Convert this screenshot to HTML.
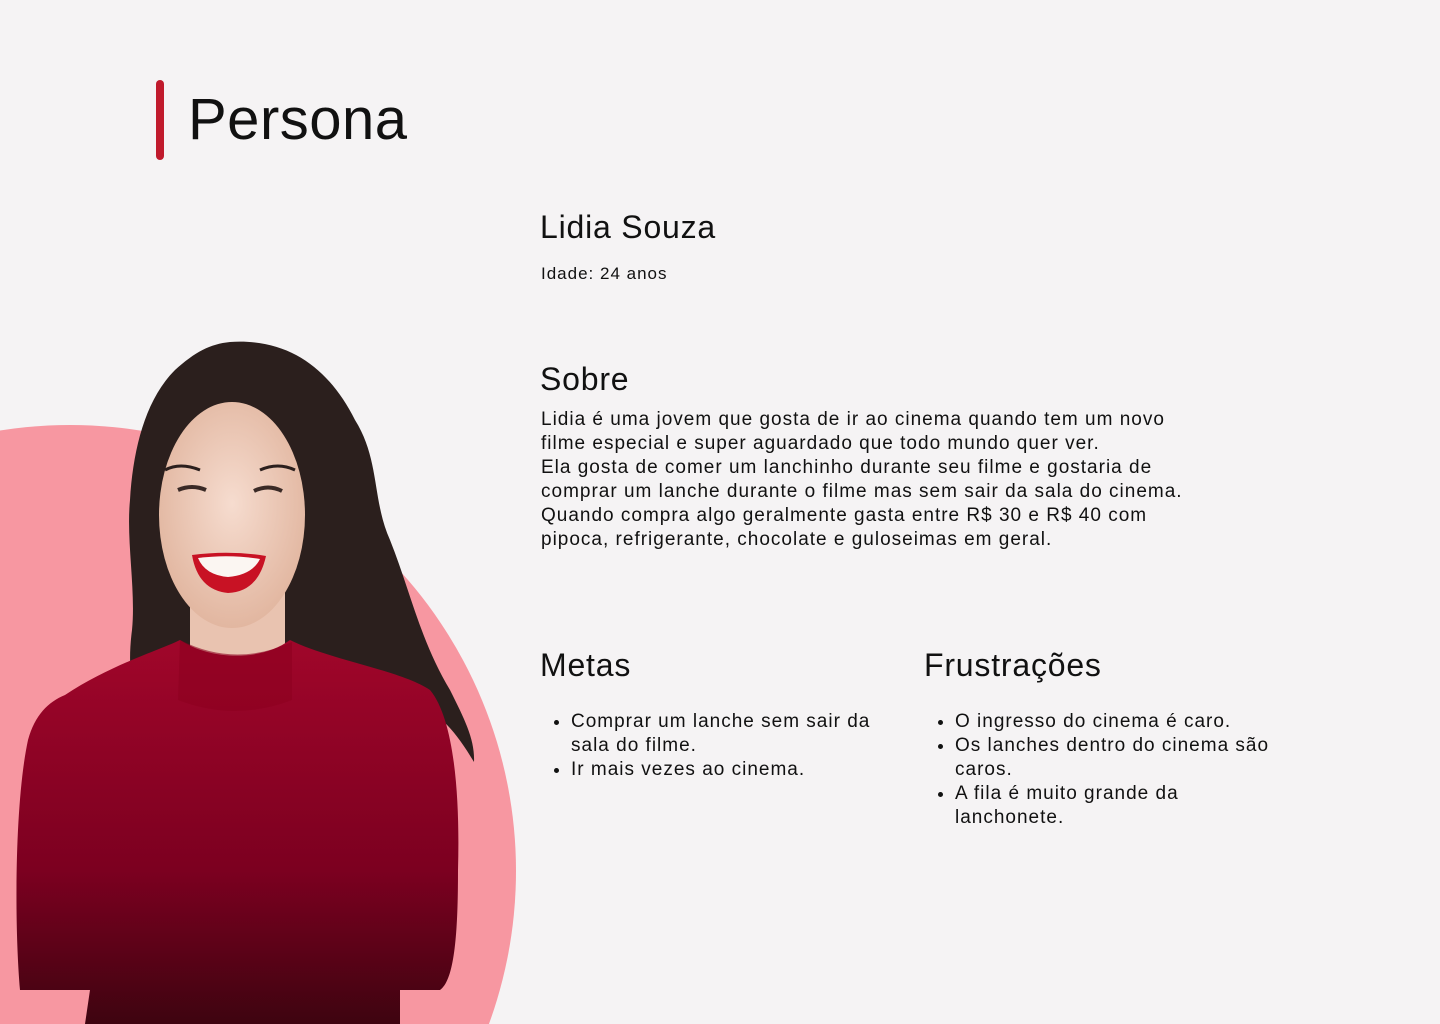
<!DOCTYPE html>
<html><head><meta charset="utf-8"><style>
html,body{margin:0;width:1440px;height:1024px;overflow:hidden}
body{background:#f5f3f4;font-family:"Liberation Sans",sans-serif;color:#111;position:relative}
.bar{position:absolute;left:156px;top:80px;width:8px;height:80px;background:#c01a2c;border-radius:4px}
h1{position:absolute;left:188px;top:84px;margin:0;font-size:58px;font-weight:400;line-height:72px;letter-spacing:0.5px}
.t{position:absolute;margin:0;white-space:nowrap}
h2{font-size:32px;font-weight:400;line-height:40px;letter-spacing:0.8px}
p,ul{font-size:19px;line-height:24px;letter-spacing:1px}
ul{padding-left:30px;margin:0}
</style></head><body>
<svg width="1440" height="1024" style="position:absolute;left:0;top:0">
<defs>
<linearGradient id="sw" x1="0" y1="0" x2="0" y2="1"><stop offset="0" stop-color="#a0062a"/><stop offset="0.6" stop-color="#7c0020"/><stop offset="1" stop-color="#3e0410"/></linearGradient>
<radialGradient id="sk" cx="0.5" cy="0.45" r="0.6"><stop offset="0" stop-color="#f6dccf"/><stop offset="1" stop-color="#e0b39c"/></radialGradient>
</defs>
<circle cx="70" cy="871" r="446" fill="#f797a1"/>
<path d="M230 342 C290 338 330 370 355 420 C380 460 372 500 390 540 C410 590 420 640 450 690 C465 720 475 740 474 762 C455 730 440 715 420 705 L140 700 C130 690 128 660 132 630 C136 590 126 540 130 500 C133 450 145 400 175 370 C195 352 210 344 230 342 Z" fill="#2b1f1d"/>
<rect x="190" y="580" width="95" height="90" fill="#e9c3b0"/>
<ellipse cx="232" cy="515" rx="73" ry="113" fill="url(#sk)"/>
<path d="M165 470 Q180 462 200 470 M260 470 Q278 462 295 470" stroke="#2b1f1d" stroke-width="3" fill="none"/>
<path d="M178 490 Q192 484 206 490 M254 491 Q268 484 282 491" stroke="#3a2a26" stroke-width="4" fill="none"/>
<path d="M192 555 Q230 550 266 556 Q258 592 228 593 Q198 590 192 555 Z" fill="#c81224"/>
<path d="M198 558 Q230 554 260 559 Q252 575 228 577 Q205 575 198 558 Z" fill="#fbf6f2"/>
<path d="M65 695 C110 665 160 650 180 640 C210 660 260 662 290 640 C330 660 400 670 430 690 C455 720 460 800 458 870 C458 930 455 980 440 990 L400 990 L400 1024 L85 1024 L90 990 L20 990 C14 920 15 800 28 740 C35 715 48 702 65 695 Z" fill="url(#sw)"/>
<path d="M180 640 Q235 668 292 642 L292 700 Q235 722 178 700 Z" fill="#8d0020" opacity="0.6"/>
</svg>
<div class="bar"></div>
<h1>Persona</h1>
<h2 class="t" style="left:540px;top:207px">Lidia Souza</h2>
<p class="t" style="left:541px;top:262px;font-size:17px">Idade: 24 anos</p>
<h2 class="t" style="left:540px;top:359px">Sobre</h2>
<p class="t" style="left:541px;top:408px">Lidia é uma jovem que gosta de ir ao cinema quando tem um novo<br>filme especial e super aguardado que todo mundo quer ver.<br>Ela gosta de comer um lanchinho durante seu filme e gostaria de<br>comprar um lanche durante o filme mas sem sair da sala do cinema.<br>Quando compra algo geralmente gasta entre R$ 30 e R$ 40 com<br>pipoca, refrigerante, chocolate e guloseimas em geral.</p>
<h2 class="t" style="left:540px;top:645px">Metas</h2>
<ul class="t" style="left:541px;top:710px"><li>Comprar um lanche sem sair da<br>sala do filme.</li><li>Ir mais vezes ao cinema.</li></ul>
<h2 class="t" style="left:924px;top:645px">Frustrações</h2>
<ul class="t" style="left:925px;top:710px"><li>O ingresso do cinema é caro.</li><li>Os lanches dentro do cinema são<br>caros.</li><li>A fila é muito grande da<br>lanchonete.</li></ul>
</body></html>
